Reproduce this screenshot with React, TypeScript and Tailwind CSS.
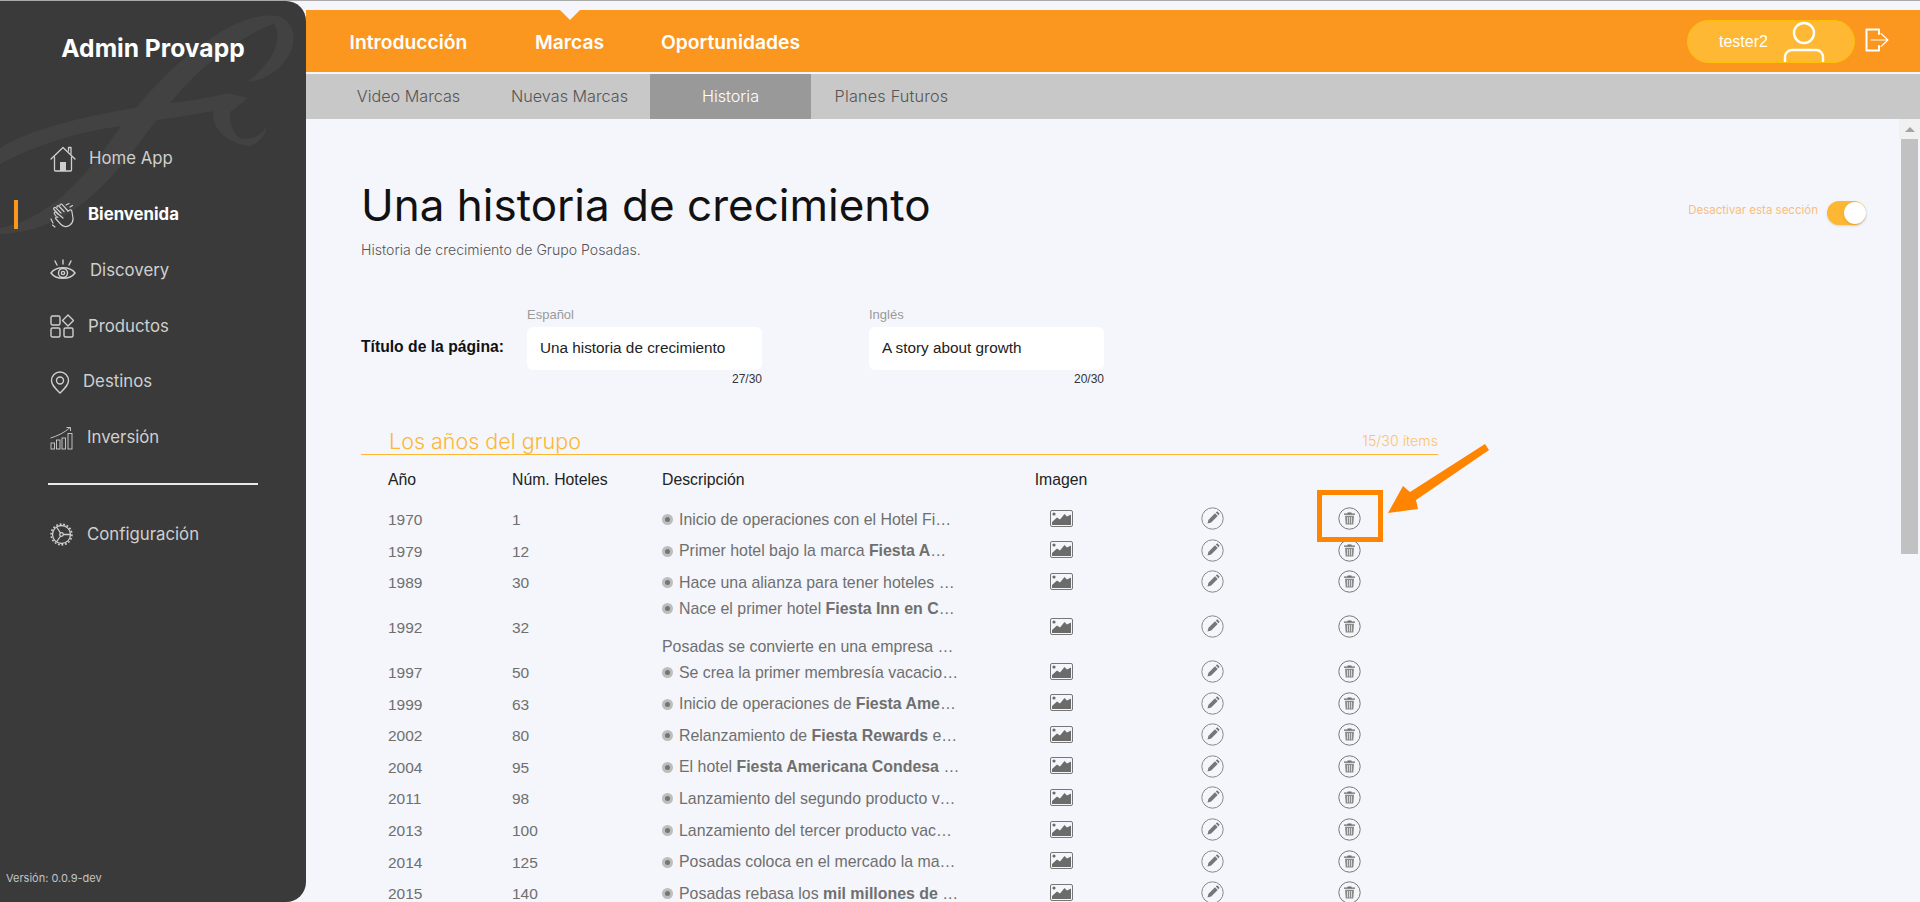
import React from 'react';

const orange = '#fb971f';

function HomeIcon() {
  return (
    <svg width="26" height="26" viewBox="0 0 26 26" fill="none" stroke="currentColor" strokeWidth="1.3" strokeLinejoin="round" strokeLinecap="round">
      <path d="M1 13 L13 1.5 L25 13" />
      <path d="M4.5 11 V24 a1 1 0 0 0 1 1 H20.5 a1 1 0 0 0 1 -1 V11" />
      <path d="M18.5 5 V1.5 H21 V8" />
      <rect x="10" y="16" width="6" height="9" fill="currentColor" stroke="none" />
    </svg>
  );
}

function ClapIcon() {
  return (
    <svg width="24" height="26" viewBox="0 0 24 26" fill="none" stroke="currentColor" strokeWidth="1.2" strokeLinecap="round" strokeLinejoin="round">
      <path d="M8 12 L4 7.5 a1.2 1.2 0 0 1 1.8 -1.6 L11 11" />
      <path d="M7 5.5 a1.2 1.2 0 0 1 1.8 -1.5 L14 9.5" />
      <path d="M10 3.5 a1.2 1.2 0 0 1 1.8 -1.3 L18 9" />
      <path d="M6 14 L4.5 12 a1.2 1.2 0 0 1 1.9 -1.5 L13 16" />
      <path d="M18 9 L20 8 a1.3 1.3 0 0 1 1.8 1 L23 16 a8 8 0 0 1 -3 7 a6.5 6.5 0 0 1 -9 -0.5 L6 17 a1.2 1.2 0 0 1 1.8 -1.7" />
      <path d="M16 3 L19 1.5 M20 5 L22.5 3.5" />
      <path d="M1 17 L3 21 M2.5 23 L5 25" />
    </svg>
  );
}

function EyeIcon() {
  return (
    <svg width="26" height="22" viewBox="0 0 26 22" fill="none" stroke="currentColor" strokeWidth="1.4" strokeLinecap="round">
      <path d="M1 14 C 6 7, 20 7, 25 14 C 20 21, 6 21, 1 14 Z" />
      <circle cx="13" cy="14" r="4.5" />
      <circle cx="13" cy="14" r="1.6" />
      <path d="M13 1 V5 M5 2 L7 6 M21 2 L19 6" />
    </svg>
  );
}

function ProductsIcon() {
  return (
    <svg width="24" height="24" viewBox="0 0 24 24" fill="none" stroke="currentColor" strokeWidth="1.4" strokeLinejoin="round">
      <rect x="1" y="2" width="9" height="9" rx="1.5" />
      <rect x="1" y="14" width="9" height="9" rx="1.5" />
      <rect x="14" y="14" width="9" height="9" rx="1.5" />
      <path d="M18 1 L23.5 6.5 L18 12 L12.5 6.5 Z" />
    </svg>
  );
}

function PinIcon() {
  return (
    <svg width="20" height="23" viewBox="0 0 20 23" fill="none" stroke="currentColor" strokeWidth="1.4">
      <path d="M10 22 C 5 17, 1.5 14, 1.5 9.5 a8.5 8.5 0 0 1 17 0 C 18.5 14, 15 17, 10 22 Z" />
      <circle cx="10" cy="9.5" r="3.5" />
    </svg>
  );
}

function ChartIcon() {
  return (
    <svg width="24" height="24" viewBox="0 0 24 24" fill="none" stroke="currentColor" strokeWidth="0.9">
      <rect x="1" y="17" width="3.5" height="6" />
      <rect x="6.5" y="14" width="3.5" height="9" />
      <rect x="12" y="12" width="3.5" height="11" />
      <rect x="18" y="7.5" width="4" height="15.5" />
      <path d="M0.5 12 C 7 10, 14 7, 20 1.5" />
      <path d="M16.5 1.5 H20.5 V5" />
    </svg>
  );
}

function GearIcon() {
  return (
    <svg width="23" height="23" viewBox="0 0 23 23" fill="none" stroke="currentColor" strokeWidth="1.3">
      <circle cx="11.5" cy="11.5" r="9" />
      <circle cx="11.5" cy="11.5" r="10.4" strokeWidth="1.6" strokeDasharray="1.8 1.8" />
      <circle cx="11.5" cy="11.5" r="1.8" />
      <path d="M13.3 11.5 H21 M10.6 10 L6.5 4 M10.6 13 L6.5 19" />
    </svg>
  );
}

function ImageIcon() {
  return (
    <svg width="23" height="17" viewBox="0 0 23 17" className="shrink-0">
      <rect x="0.5" y="0.5" width="22" height="16" rx="1.5" fill="none" stroke="#777" />
      <circle cx="4" cy="4" r="1.6" fill="#6b6b6b" />
      <path d="M2 15 V12 L7 7.5 L10 9.5 L14.5 4 L17 6.5 L21 4.5 V15 Z" fill="#6b6b6b" />
    </svg>
  );
}

function EditIcon() {
  return (
    <svg width="23" height="23" viewBox="0 0 23 23" className="shrink-0">
      <circle cx="11.5" cy="11.5" r="10.7" fill="none" stroke="#888" />
      <path d="M6.5 16.5 L7.5 12.8 L14 6.3 L16.7 9 L10.2 15.5 Z M14.8 5.5 L15.6 4.8 a0.9 0.9 0 0 1 1.2 0 L18.2 6.2 a0.9 0.9 0 0 1 0 1.2 L17.5 8.2 Z" fill="#777" />
    </svg>
  );
}

function TrashIcon() {
  return (
    <svg width="23" height="23" viewBox="0 0 23 23" className="shrink-0">
      <circle cx="11.5" cy="11.5" r="10.7" fill="none" stroke="#777" />
      <path d="M9.5 5.5 H13.5 V6.6 H17 V7.8 H6 V6.6 H9.5 Z" fill="#6b6b6b" />
      <path d="M7 8.8 H16 L15.3 17.5 H7.7 Z" fill="#8a8a8a" />
      <path d="M9.5 10 V16.5 M11.5 10 V16.5 M13.5 10 V16.5" stroke="#f4f6fb" strokeWidth="0.7" />
    </svg>
  );
}

function Watermark() {
  return (
    <svg width="306" height="240" viewBox="0 0 306 240" className="absolute left-0 top-0" fill="#424242">
      <path d="M0 227 C 40 220 75 190 110 140 C 140 100 170 65 207 40 C 235 20 260 12 277 15 C 292 18 298 35 290 52 C 282 68 265 80 247 81 C 262 70 277 52 277 38 C 278 30 276 25 273 23 C 250 32 225 48 200 70 C 175 93 150 128 133 150 C 110 180 85 203 67 213 C 45 226 20 233 0 233 Z" />
      <path d="M0 147 C 30 128 80 117 127 108 C 165 102 200 100 227 92 L 248 97 C 240 100 235 105 232 110 L 213 110 C 170 118 120 124 83 132 C 50 140 25 150 0 163 Z" />
      <path d="M213 110 C 212 125 222 140 247 145 C 258 145 265 135 267 125 C 262 133 255 138 245 138 C 235 138 230 125 230 115 C 230 105 238 100 248 97 L 232 110 Z" />
    </svg>
  );
}

const navItems = [
  { label: 'Home App', icon: <HomeIcon />, textClass: 'ml-[13px]' },
  { label: 'Bienvenida', icon: <ClapIcon />, textClass: 'ml-[14px] font-bold text-white', active: true },
  { label: 'Discovery', icon: <EyeIcon />, textClass: 'ml-[14px]' },
  { label: 'Productos', icon: <ProductsIcon />, textClass: 'ml-[14px]' },
  { label: 'Destinos', icon: <PinIcon />, textClass: 'ml-[13px]' },
  { label: 'Inversión', icon: <ChartIcon />, textClass: 'ml-[13px]' },
];

function Sidebar() {
  return (
    <aside className="relative w-[306px] h-full shrink-0 bg-[#3a3a3a] rounded-r-[20px] text-[#cfcfcf] overflow-hidden flex flex-col font-['Inter',sans-serif]">
      <Watermark />
      <h1 className="relative mt-[32px] h-[30px] leading-[30px] text-center text-[24.6px] font-bold text-white">Admin Provapp</h1>
      <nav className="relative mt-[68px]">
        {navItems.map((item) => (
          <div key={item.label} className="relative h-[55.8px] pl-[50px] flex items-center text-[16.8px]">
            {item.active && <span className="absolute left-[14px] top-[13px] h-[29px] w-[4px] bg-[#fb971f]" />}
            {item.icon}
            <span className={item.textClass}>{item.label}</span>
          </div>
        ))}
      </nav>
      <div className="relative mt-[17px] ml-[48px] w-[210px] h-[2px] bg-[#e8e8e8]" />
      <div className="relative mt-[37px] h-[26px] pl-[50px] flex items-center text-[16.8px]">
        <GearIcon />
        <span className="ml-[14px]">Configuración</span>
      </div>
      <div className="mt-auto mb-[16px] ml-[6px] relative text-[11px] text-[#c4c4c4]">Versión: 0.0.9-dev</div>
    </aside>
  );
}

function TopBars() {
  return (
    <div className="shrink-0">
      <div className="relative mt-[10px] h-[62px] flex items-center pl-[22px] text-white text-[19.3px] font-semibold font-['Inter',sans-serif]" style={{ backgroundColor: orange }}>
        <span className="absolute left-[254px] top-0 w-0 h-0 border-x-[10px] border-x-transparent border-t-[10px] border-t-[#f4f6fb]" />
        <span className="w-[161px] text-center pt-[2px]">Introducción</span>
        <span className="w-[161px] text-center pt-[2px]">Marcas</span>
        <span className="w-[161px] text-center pt-[2px]">Oportunidades</span>
        <div className="ml-auto h-[43px] w-[168px] rounded-full bg-[#ffb833] border border-[#ffc107] flex items-center overflow-hidden">
          <span className="ml-[31px] pt-[1px] text-[16px] font-normal font-['Liberation_Sans',sans-serif]">tester2</span>
          <svg width="42" height="42" viewBox="0 0 42 42" className="ml-[15px] self-start" fill="none" stroke="white" strokeWidth="2.4">
            <circle cx="21" cy="12" r="10" />
            <path d="M2 44 V36 a7 7 0 0 1 7 -7 H33 a7 7 0 0 1 7 7 V44" />
          </svg>
        </div>
        <svg width="24" height="24" viewBox="0 0 24 24" className="ml-[10px] mr-[31px] -mt-[2px]" fill="none" stroke="white" strokeLinecap="round" strokeLinejoin="round">
          <path d="M14 6 V1.5 H1.5 V22.5 H14 V18" strokeWidth="2" />
          <path d="M6 12 H22.5 M16 5.5 L23 12 L16 18.5" strokeWidth="1.1" />
        </svg>
      </div>
      <div className="mt-[2px] h-[45px] pl-[22px] bg-[#c8c8c8] flex text-[16.2px] font-light text-[#555] font-['Inter',sans-serif]">
        <span className="w-[161px] flex items-center justify-center">Video Marcas</span>
        <span className="w-[161px] flex items-center justify-center">Nuevas Marcas</span>
        <span className="w-[161px] flex items-center justify-center bg-[#999999] text-white">Historia</span>
        <span className="w-[161px] flex items-center justify-center tracking-[0.2px]">Planes Futuros</span>
      </div>
    </div>
  );
}

type Row = { year: string; hotels: string; desc: React.ReactNode; second?: string };

const rows: Row[] = [
  { year: '1970', hotels: '1', desc: 'Inicio de operaciones con el Hotel Fi…' },
  { year: '1979', hotels: '12', desc: <>Primer hotel bajo la marca <b>Fiesta A</b>…</> },
  { year: '1989', hotels: '30', desc: 'Hace una alianza para tener hoteles …' },
  { year: '1992', hotels: '32', desc: <>Nace el primer hotel <b>Fiesta Inn en C</b>…</>, second: 'Posadas se convierte en una empresa …' },
  { year: '1997', hotels: '50', desc: 'Se crea la primer membresía vacacio…' },
  { year: '1999', hotels: '63', desc: <>Inicio de operaciones de <b>Fiesta Ame</b>…</> },
  { year: '2002', hotels: '80', desc: <>Relanzamiento de <b>Fiesta Rewards</b> e…</> },
  { year: '2004', hotels: '95', desc: <>El hotel <b>Fiesta Americana Condesa</b> …</> },
  { year: '2011', hotels: '98', desc: 'Lanzamiento del segundo producto v…' },
  { year: '2013', hotels: '100', desc: 'Lanzamiento del tercer producto vac…' },
  { year: '2014', hotels: '125', desc: 'Posadas coloca en el mercado la ma…' },
  { year: '2015', hotels: '140', desc: <>Posadas rebasa los <b>mil millones de</b> …</> },
];

function Bullet() {
  return (
    <span className="shrink-0 w-[11px] h-[11px] rounded-full bg-[#bdbdbd] flex items-center justify-center mr-[6px]">
      <span className="w-[5px] h-[5px] rounded-full bg-[#757575]" />
    </span>
  );
}

function HistoryTable() {
  return (
    <div className="pl-[27px] font-['Liberation_Sans',sans-serif] text-[15.5px]">
      <div className="flex h-[32px] mt-[5px] pt-[8px] items-center text-[#222] text-[15.8px]">
        <span className="w-[124px]">Año</span>
        <span className="w-[150px]">Núm. Hoteles</span>
        <span className="w-[346px]">Descripción</span>
        <span className="w-[106px] text-center">Imagen</span>
      </div>
      <div className="mt-[12px] text-[#6f6f6f]">
        {rows.map((row) => (
          <div key={row.year} className={`flex items-center ${row.second ? 'h-[58px]' : 'h-[31.6px]'}`}>
            <span className="w-[124px]">{row.year}</span>
            <span className="w-[150px]">{row.hotels}</span>
            <div className="w-[346px] text-[15.9px] leading-[18px]">
              <div className="flex items-center w-[300px] whitespace-nowrap">
                <Bullet />
                <span>{row.desc}</span>
              </div>
              {row.second && <div className="mt-[20px] whitespace-nowrap">{row.second}</div>}
            </div>
            <span className="w-[106px] flex justify-center -mt-[3px]"><ImageIcon /></span>
            <span className="w-[196px] flex justify-center -mt-[2px]"><EditIcon /></span>
            <span className="w-[78px] flex justify-center -mt-[2px]"><TrashIcon /></span>
          </div>
        ))}
      </div>
    </div>
  );
}

function Field({ label, value, count }: { label: string; value: string; count: string }) {
  return (
    <div className="w-[235px]">
      <div className="text-[13px] leading-[16px] h-[20px] text-[#9a9a9a]">{label}</div>
      <div className="h-[43px] bg-white rounded-[6px] px-[13px] flex items-center text-[15.3px] text-[#222]">{value}</div>
      <div className="mt-[3px] text-right text-[12px] leading-[13px] text-[#333]">{count}</div>
    </div>
  );
}

function ScrollBar() {
  return (
    <div className="w-[21px] shrink-0 flex flex-col items-center">
      <div className="h-[20px] w-full bg-[#f1f1f1] flex items-center justify-center">
        <span className="w-0 h-0 border-x-[5px] border-x-transparent border-b-[5px] border-b-[#a3a3a3]" />
      </div>
      <div className="h-[415px] w-[17px] bg-[#c1c1c1]" />
    </div>
  );
}

export default function App() {
  return (
    <div className="relative h-screen w-full overflow-hidden bg-[#f4f6fb] flex border-t border-[#aaaaaa]">
      <Sidebar />
      <main className="flex-1 min-w-0 flex flex-col -mt-px">
        <TopBars />
        <div className="flex-1 min-h-0 flex">
          <div className="flex-1 min-w-0 overflow-hidden pl-[55px]">
            <div className="mt-[59px] flex items-start">
              <div>
                <h2 className="text-[44px] leading-[54px] text-[#111] font-['Inter',sans-serif]">Una historia de crecimiento</h2>
                <p className="mt-[9px] text-[14.1px] leading-[18px] text-[#555] font-['Inter',sans-serif] font-light">Historia de crecimiento de Grupo Posadas.</p>
              </div>
              <div className="ml-auto mr-[33px] mt-[23px] flex items-center">
                <span className="-mt-[4px] text-[11.5px] text-[#fbbd7b] font-['Inter',sans-serif]">Desactivar esta sección</span>
                <span className="ml-[9px] relative w-[39px] h-[24px] rounded-full bg-[#fdb733] shadow-sm">
                  <span className="absolute right-0 top-[1px] w-[22px] h-[22px] rounded-full bg-white shadow" />
                </span>
              </div>
            </div>
            <div className="mt-[48px] flex items-center font-['Liberation_Sans',sans-serif]">
              <div className="w-[166px] text-[15.7px] font-bold text-[#111]">Título de la página:</div>
              <Field label="Español" value="Una historia de crecimiento" count="27/30" />
              <div className="w-[107px]" />
              <Field label="Inglés" value="A story about growth" count="20/30" />
            </div>
            <div className="mt-[37px] w-[1077px] h-[32px] pl-[28px] pt-[5px] flex items-center justify-between border-b border-[#fdb733] text-[#fdb733] font-['Inter',sans-serif] font-light">
              <span className="text-[21.5px]">Los años del grupo</span>
              <span className="text-[14.2px] text-[#fdc36b]">15/30 ítems</span>
            </div>
            <HistoryTable />
          </div>
          <ScrollBar />
        </div>
      </main>
      {/* flecha y recuadro que marcan el boton de borrar */}
      <div className="absolute left-[1317px] top-[489px] w-[66px] h-[52px] border-[5px] border-[#ff8400]" />
      <svg width="120" height="90" viewBox="0 0 120 90" className="absolute left-[1380px] top-[435px]" fill="#ff8400">
        <path d="M105 8 L109 14 L36 64 L38 73 L8 77 L23 50 L30 56 Z" />
      </svg>
    </div>
  );
}
